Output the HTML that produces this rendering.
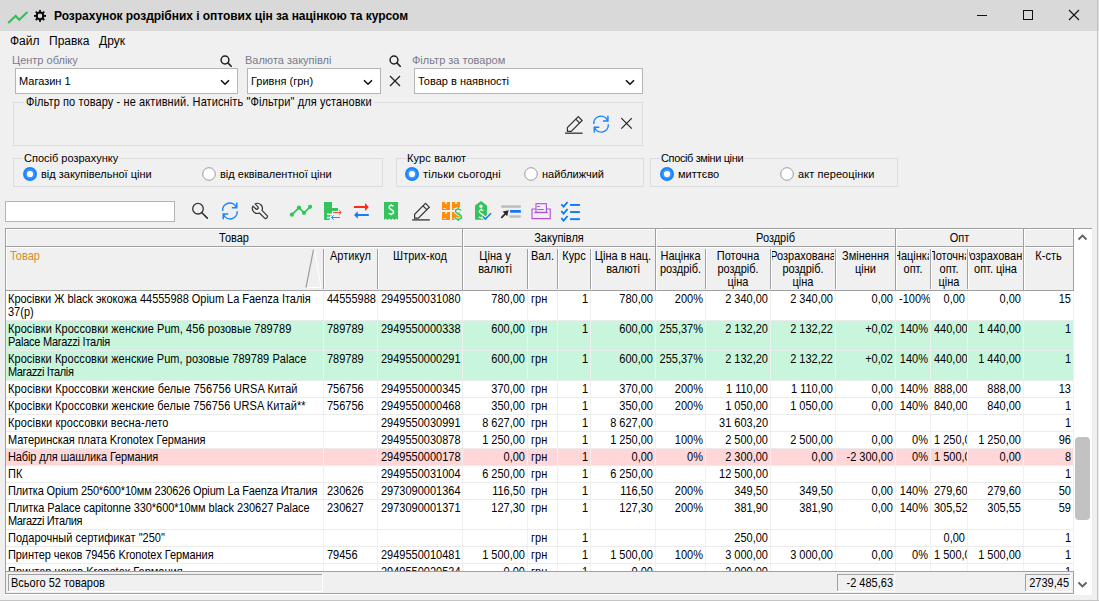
<!DOCTYPE html><html><head><meta charset='utf-8'><style>
*{box-sizing:border-box}
html,body{margin:0;padding:0}
body{width:1099px;height:601px;overflow:hidden;background:#f0f0f0;position:relative;font-family:'Liberation Sans',sans-serif;color:#000}
.a{position:absolute}
.t{position:absolute;white-space:pre;line-height:13px}
.g{font-size:11px}
.ln{display:block;transform:scaleY(1.12);transform-origin:0 10px}
</style></head><body>
<div class='a' style='left:0;top:0;width:1099px;height:31px;background:#d9d9d9'></div>
<svg class='a' style='left:0;top:0' width='52' height='31' viewBox='0 0 52 31'><polyline points='8.2,23 15.6,16 19.3,19.8 27.4,12.1' fill='none' stroke='#2ec05a' stroke-width='2.1' stroke-linejoin='miter'/><g fill='#0a0a0a'><rect x='39.1' y='9.9' width='1.8' height='3.2' transform='rotate(0 40 15.9)'/><rect x='39.1' y='9.9' width='1.8' height='3.2' transform='rotate(45 40 15.9)'/><rect x='39.1' y='9.9' width='1.8' height='3.2' transform='rotate(90 40 15.9)'/><rect x='39.1' y='9.9' width='1.8' height='3.2' transform='rotate(135 40 15.9)'/><rect x='39.1' y='9.9' width='1.8' height='3.2' transform='rotate(180 40 15.9)'/><rect x='39.1' y='9.9' width='1.8' height='3.2' transform='rotate(225 40 15.9)'/><rect x='39.1' y='9.9' width='1.8' height='3.2' transform='rotate(270 40 15.9)'/><rect x='39.1' y='9.9' width='1.8' height='3.2' transform='rotate(315 40 15.9)'/></g><circle cx='40' cy='15.9' r='3.35' fill='none' stroke='#0a0a0a' stroke-width='2.1'/></svg>
<div class='t' style='left:54px;top:10px;font-size:12px;font-weight:bold;letter-spacing:-0.04px'>Розрахунок роздрібних і оптових цін за націнкою та курсом</div>
<div class='a' style='left:977px;top:15px;width:10px;height:1px;background:#111'></div>
<div class='a' style='left:1023px;top:10px;width:10px;height:10px;border:1px solid #111'></div>
<svg class='a' style='left:1068px;top:9px' width='12' height='12' viewBox='0 0 12 12'><path d='M1 1L11 11M11 1L1 11' stroke='#111' stroke-width='1.1'/></svg>
<div class='a' style='left:1097px;top:0;width:1px;height:601px;background:#c4c4c4'></div>
<div class='a' style='left:0;top:600px;width:1099px;height:1px;background:#c4c4c4'></div>
<div class='t' style='left:10px;top:35px;font-size:12px'>Файл</div>
<div class='t' style='left:49px;top:35px;font-size:12px'>Правка</div>
<div class='t' style='left:99px;top:35px;font-size:12px'>Друк</div>
<div class='t' style='left:12px;top:54px;font-size:11px;color:#7a7a8a'>Центр обліку</div>
<svg class='a' style='left:220px;top:55px' width='12' height='12' viewBox='0 0 12 12'><circle cx='5' cy='5' r='3.9' fill='none' stroke='#222' stroke-width='1.5'/><path d='M7.9 7.9L11.2 11.2' stroke='#222' stroke-width='1.6' stroke-linecap='round'/></svg>
<div class='a' style='left:15px;top:68px;width:223px;height:26px;background:#fff;border:1px solid #b4b4b4'></div>
<div class='t' style='left:19px;top:75px;font-size:11px;color:#000'>Магазин 1</div>
<svg class='a' style='left:220px;top:79px' width='10' height='7' viewBox='0 0 10 7'><path d='M1 1.2L5 5.2L9 1.2' fill='none' stroke='#111' stroke-width='1.6'/></svg>
<div class='t' style='left:245px;top:54px;font-size:11px;color:#7a7a8a'>Валюта закупівлі</div>
<svg class='a' style='left:389px;top:55px' width='12' height='12' viewBox='0 0 12 12'><circle cx='5' cy='5' r='3.9' fill='none' stroke='#222' stroke-width='1.5'/><path d='M7.9 7.9L11.2 11.2' stroke='#222' stroke-width='1.6' stroke-linecap='round'/></svg>
<div class='a' style='left:247px;top:68px;width:134px;height:26px;background:#fff;border:1px solid #b4b4b4'></div>
<div class='t' style='left:251px;top:75px;font-size:11px;color:#000'>Гривня (грн)</div>
<svg class='a' style='left:363px;top:79px' width='10' height='7' viewBox='0 0 10 7'><path d='M1 1.2L5 5.2L9 1.2' fill='none' stroke='#111' stroke-width='1.6'/></svg>
<svg class='a' style='left:389px;top:75px' width='12' height='12' viewBox='0 0 12 12'><path d='M1 1L11 11M11 1L1 11' stroke='#222' stroke-width='1.3'/></svg>
<div class='t' style='left:412px;top:54px;font-size:11px;color:#7a7a8a'>Фільтр за товаром</div>
<div class='a' style='left:414px;top:68px;width:229px;height:26px;background:#fff;border:1px solid #b4b4b4'></div>
<div class='t' style='left:418px;top:75px;font-size:11px;color:#000'>Товар в наявності</div>
<svg class='a' style='left:625px;top:79px' width='10' height='7' viewBox='0 0 10 7'><path d='M1 1.2L5 5.2L9 1.2' fill='none' stroke='#111' stroke-width='1.6'/></svg>
<div class='a' style='left:13px;top:102px;width:630px;height:44px;border:1px solid #dcdcdc'></div>
<div class='t g' style='left:24px;top:96px;background:#f0f0f0;padding:0 2px;letter-spacing:0.1px'><div class='ln'>Фільтр по товару - не активний. Натисніть "Фільтри" для установки</div></div>
<svg class='a' style='left:560px;top:110px' width='80' height='30' viewBox='560 110 80 30'>
<g transform='translate(152.8 -86.7)' fill='none' stroke='#333' stroke-width='1.2' stroke-linejoin='miter'>
<path d='M414.6 214.3V218.1H418.4L429.3 207.2L425.5 203.4Z'/><path d='M423 205.9L426.8 209.7'/>
<path d='M412.2 219.9H429.8' stroke-width='1.3'/></g>
<g transform='translate(371.1 -86.8)' fill='none' stroke='#1a84ff' stroke-width='1.5'>
<path d='M222.7 210.8A7.1 7.1 0 0 1 236.3 207.3'/><path d='M236.8 202.6V207.8H231.8'/>
<path d='M237.2 211.2A7.1 7.1 0 0 1 223.6 214.6'/><path d='M223.2 219.2V214H228.2'/>
</g>
<path d='M621.3 118.2L631.8 128.7M631.8 118.2L621.3 128.7' stroke='#222' stroke-width='1.2'/>
</svg>
<div class='a' style='left:13px;top:158px;width:370px;height:29px;border:1px solid #dcdcdc'></div>
<div class='t' style='left:23px;top:151.5px;font-size:11px;background:#f0f0f0;padding:0 1px;letter-spacing:0px'>Спосіб розрахунку</div>
<svg class='a' style='left:23px;top:167px' width='14' height='14' viewBox='0 0 14 14'><circle cx='7' cy='7' r='7' fill='#1a82ff'/><circle cx='7' cy='7' r='4.9' fill='#3c98ff'/><circle cx='7' cy='7' r='3.1' fill='#fff'/></svg>
<div class='t' style='left:41px;top:168px;font-size:11px;letter-spacing:0px'>від закупівельної ціни</div>
<svg class='a' style='left:202px;top:167px' width='14' height='14' viewBox='0 0 14 14'><circle cx='7' cy='7' r='6.3' fill='#fff' stroke='#9a9a9a' stroke-width='1'/></svg>
<div class='t' style='left:220px;top:168px;font-size:11px;letter-spacing:0px'>від еквівалентної ціни</div>
<div class='a' style='left:396px;top:158px;width:248px;height:29px;border:1px solid #dcdcdc'></div>
<div class='t' style='left:406px;top:151.5px;font-size:11px;background:#f0f0f0;padding:0 1px;letter-spacing:0.15px'>Курс валют</div>
<svg class='a' style='left:405px;top:167px' width='14' height='14' viewBox='0 0 14 14'><circle cx='7' cy='7' r='7' fill='#1a82ff'/><circle cx='7' cy='7' r='4.9' fill='#3c98ff'/><circle cx='7' cy='7' r='3.1' fill='#fff'/></svg>
<div class='t' style='left:423px;top:168px;font-size:11px;letter-spacing:0.15px'>тільки сьогодні</div>
<svg class='a' style='left:524px;top:167px' width='14' height='14' viewBox='0 0 14 14'><circle cx='7' cy='7' r='6.3' fill='#fff' stroke='#9a9a9a' stroke-width='1'/></svg>
<div class='t' style='left:542px;top:168px;font-size:11px;letter-spacing:0px'>найближчий</div>
<div class='a' style='left:650px;top:158px;width:248px;height:29px;border:1px solid #dcdcdc'></div>
<div class='t' style='left:660px;top:151.5px;font-size:11px;background:#f0f0f0;padding:0 1px;letter-spacing:-0.38px'>Спосіб зміни ціни</div>
<svg class='a' style='left:660px;top:167px' width='14' height='14' viewBox='0 0 14 14'><circle cx='7' cy='7' r='7' fill='#1a82ff'/><circle cx='7' cy='7' r='4.9' fill='#3c98ff'/><circle cx='7' cy='7' r='3.1' fill='#fff'/></svg>
<div class='t' style='left:678px;top:168px;font-size:11px;letter-spacing:0px'>миттєво</div>
<svg class='a' style='left:780px;top:167px' width='14' height='14' viewBox='0 0 14 14'><circle cx='7' cy='7' r='6.3' fill='#fff' stroke='#9a9a9a' stroke-width='1'/></svg>
<div class='t' style='left:798px;top:168px;font-size:11px;letter-spacing:0.08px'>акт переоцінки</div>
<div class='a' style='left:5px;top:201px;width:170px;height:21px;background:#fff;border:1px solid #b4b4b4'></div>
<svg class='a' style='left:180px;top:195px' width='415' height='30' viewBox='180 195 415 30'>
<circle cx='198' cy='208.7' r='5.3' fill='none' stroke='#333' stroke-width='1.3'/><path d='M201.9 212.7L207.3 218.1' stroke='#333' stroke-width='1.6' stroke-linecap='round'/>
<g transform='translate(0 0)' fill='none' stroke='#1a84ff' stroke-width='1.5'>
<path d='M222.7 210.8A7.1 7.1 0 0 1 236.3 207.3'/><path d='M236.8 202.6V207.8H231.8'/>
<path d='M237.2 211.2A7.1 7.1 0 0 1 223.6 214.6'/><path d='M223.2 219.2V214H228.2'/>
</g>
<path transform='translate(257.4 208.4) rotate(-45)' d='M-1.5 -4.8L-1.5 -1A1.5 1.5 0 0 0 1.5 -1L1.5 -4.8A5 5 0 0 1 1.8 4.66L1.8 11.6A1.8 1.8 0 0 1 -1.8 11.6L-1.8 4.66A5 5 0 0 1 -1.5 -4.8Z' fill='none' stroke='#333' stroke-width='1.2' stroke-linejoin='round'/>
<polyline points='291.9,214.7 299,207.6 304,212.85 310.1,206.8' fill='none' stroke='#2ec657' stroke-width='1.7'/>
<circle cx='291.9' cy='214.7' r='2.1' fill='#2ec657'/>
<circle cx='299' cy='207.6' r='2.1' fill='#2ec657'/>
<circle cx='304' cy='212.85' r='2.1' fill='#2ec657'/>
<circle cx='310.1' cy='206.8' r='2.1' fill='#2ec657'/>
<path d='M324 202H332V208H338V211H332V220H324Z' fill='#34c35c'/>
<rect x='327' y='213.5' width='6' height='1.6' fill='#f0f0f0'/><rect x='327' y='216.8' width='4' height='1.6' fill='#f0f0f0'/><path d='M329 220L332 217.5V220Z' fill='#f0f0f0'/>
<rect x='332' y='211' width='10' height='3' fill='#f0f0f0'/><rect x='330' y='215.5' width='12' height='5' fill='#f0f0f0'/>
<path d='M333 212.5H341M339 210.3L341.3 212.5L339 214.7' fill='none' stroke='#ff3322' stroke-width='0.9'/>
<path d='M331.5 217.5H340M333.7 215.3L331.5 217.5L333.7 219.7' fill='none' stroke='#1a7aff' stroke-width='0.9'/>
<rect x='354' y='206' width='12' height='2' fill='#ff2a1a'/><path d='M365 203L368.8 207L365 211Z' fill='#ff2a1a'/>
<rect x='357' y='214' width='11.8' height='2' fill='#1a7aff'/><path d='M357.8 211.2L354 215L357.8 218.8Z' fill='#1a7aff'/>
<path d='M384 202H398V220L396.25 218.6L394.5 220L392.75 218.6L391 220L389.25 218.6L387.5 220L385.75 218.6L384 220Z' fill='#34c35c'/>
<path d='M393.4 206.3C392.6 205.3 389.2 205 389 207.3C388.9 209.5 393.6 209.6 393.6 212.2C393.6 214.5 389.8 214.4 388.8 213.2M391.2 204.3V205.4M391.2 214.2V215.3' fill='none' stroke='#fff' stroke-width='1.5'/>
<g transform='translate(0 0)' fill='none' stroke='#333' stroke-width='1.2' stroke-linejoin='miter'>
<path d='M414.6 214.3V218.1H418.4L429.3 207.2L425.5 203.4Z'/><path d='M423 205.9L426.8 209.7'/>
<path d='M412.2 219.9H429.8' stroke-width='1.3'/></g>
<rect x='442' y='202' width='8' height='8' fill='#ff8f0a'/><rect x='445.2' y='202' width='1.6' height='2' fill='#f0f0f0'/><rect x='443.3' y='208.1' width='2.6' height='0.8' fill='#f0f0f0'/>
<rect x='452' y='202' width='8' height='8' fill='#ff8f0a'/><rect x='455.2' y='202' width='1.6' height='2' fill='#f0f0f0'/><rect x='453.3' y='208.1' width='2.6' height='0.8' fill='#f0f0f0'/>
<rect x='442' y='212' width='8' height='8' fill='#ff8f0a'/><rect x='445.2' y='212' width='1.6' height='2' fill='#f0f0f0'/><rect x='443.3' y='218.1' width='2.6' height='0.8' fill='#f0f0f0'/>
<rect x='452' y='212' width='8' height='8' fill='#ff8f0a'/><rect x='455.2' y='212' width='1.6' height='2' fill='#f0f0f0'/><rect x='453.3' y='218.1' width='2.6' height='0.8' fill='#f0f0f0'/>
<path d='M461 210.6C460.3 208.8 455.6 208.3 455.4 211.3C455.3 214.2 461.5 213.8 461.5 217C461.5 219.8 456.2 219.7 455 217.8M458.2 207V209M458.2 219.3V221' fill='none' stroke='#f0f0f0' stroke-width='3.2'/>
<path d='M461 210.6C460.3 208.8 455.6 208.3 455.4 211.3C455.3 214.2 461.5 213.8 461.5 217C461.5 219.8 456.2 219.7 455 217.8M458.2 207V209M458.2 219.3V221' fill='none' stroke='#2ec657' stroke-width='1.4'/>
<path d='M481 201L487 205.5V219.8H475V205.5Z' fill='#34c35c'/><circle cx='481' cy='206.3' r='1.7' fill='#f0f0f0'/>
<path d='M483.3 210.6C482.6 209.6 479.3 209.4 479.2 211.6C479.1 213.6 483.5 213.6 483.5 215.9C483.5 218 479.8 217.9 479 216.9M481.3 208.6V209.6M481.3 217.6V218.8' fill='none' stroke='#fff' stroke-width='1.3'/>
<path d='M483 216.5L485.3 219L491 213.2' fill='none' stroke='#f0f0f0' stroke-width='3.4'/><path d='M483 216.5L485.3 219L491 213.2' fill='none' stroke='#1a7aff' stroke-width='1.6'/>
<rect x='501.2' y='205.3' width='19.6' height='2.5' fill='#bdbdbd'/><rect x='510.1' y='210' width='10.7' height='2.7' fill='#0a78ff'/><rect x='509.3' y='215.3' width='11.5' height='2.5' fill='#bdbdbd'/>
<path d='M501.8 217.4L506 213.2' stroke='#2b2b2b' stroke-width='1.8' stroke-linecap='round'/><path d='M508.6 210.2L502.6 211.6L507.2 216.2Z' fill='#2b2b2b'/>
<g fill='none' stroke='#b04ee0' stroke-width='1.1'><path d='M536 209H532V218.6H550.2V209H546.4'/><rect x='536' y='203.7' width='10.4' height='8.6'/><path d='M534.3 212.6H547.8'/><path d='M537.3 206.5H539.8M537.3 209.5H543.8'/></g>
<path d='M561.3 204.4L563.6 206.6L567.6 202' fill='none' stroke='#0a78ff' stroke-width='1.8'/>
<rect x='570.1' y='204.0' width='9.8' height='1.9' fill='#0a78ff'/>
<path d='M561.3 211.1L563.6 213.6L567.6 209' fill='none' stroke='#0a78ff' stroke-width='1.8'/>
<rect x='570.1' y='211.1' width='9.8' height='1.9' fill='#0a78ff'/>
<path d='M561.3 218.1L563.6 220.6L567.6 216' fill='none' stroke='#0a78ff' stroke-width='1.8'/>
<rect x='570.1' y='218.2' width='9.8' height='1.9' fill='#0a78ff'/>
</svg>
<div class='a' style='left:6px;top:291px;width:1067px;height:302px;background:#fff;'></div>
<div class='a' style='left:6px;top:229px;width:1067px;height:61px;background:#f0f0f0;'></div>
<div class='a' style='left:6px;top:291px;width:1067px;height:30px;background:#fff;overflow:hidden'>
<div class='a' style='left:317px;top:0px;width:1px;height:29px;background:#f0f0f0;'></div>
<div class='a' style='left:371px;top:0px;width:1px;height:29px;background:#f0f0f0;'></div>
<div class='a' style='left:456px;top:0px;width:1px;height:29px;background:#f0f0f0;'></div>
<div class='a' style='left:521px;top:0px;width:1px;height:29px;background:#f0f0f0;'></div>
<div class='a' style='left:551px;top:0px;width:1px;height:29px;background:#f0f0f0;'></div>
<div class='a' style='left:584px;top:0px;width:1px;height:29px;background:#f0f0f0;'></div>
<div class='a' style='left:649px;top:0px;width:1px;height:29px;background:#f0f0f0;'></div>
<div class='a' style='left:699px;top:0px;width:1px;height:29px;background:#f0f0f0;'></div>
<div class='a' style='left:764px;top:0px;width:1px;height:29px;background:#f0f0f0;'></div>
<div class='a' style='left:829px;top:0px;width:1px;height:29px;background:#f0f0f0;'></div>
<div class='a' style='left:889px;top:0px;width:1px;height:29px;background:#f0f0f0;'></div>
<div class='a' style='left:924px;top:0px;width:1px;height:29px;background:#f0f0f0;'></div>
<div class='a' style='left:961px;top:0px;width:1px;height:29px;background:#f0f0f0;'></div>
<div class='a' style='left:1017px;top:0px;width:1px;height:29px;background:#f0f0f0;'></div>
<div class='a' style='left:0px;top:29px;width:1067px;height:1px;background:#ebebeb;'></div>
<div class='t g' style='left:0px;top:2px;width:317px;height:28px;overflow:hidden;text-align:left;padding-left:2px;padding-right:2px'><div class='ln' style='letter-spacing:-0.022px'>Кросівки Ж black экокожа 44555988 Opium La Faenza Італія</div><div class='ln' style='letter-spacing:0.000px'>37(р)</div></div>
<div class='t g' style='left:318px;top:2px;width:53px;height:28px;overflow:hidden;text-align:left;padding-left:3px;padding-right:2px'><div class='ln'>44555988</div></div>
<div class='t g' style='left:372px;top:2px;width:84px;height:28px;overflow:hidden;text-align:left;padding-left:3px;padding-right:2px'><div class='ln'>2949550031080</div></div>
<div class='t g' style='left:457px;top:2px;width:64px;height:28px;overflow:hidden;text-align:right;padding-left:3px;padding-right:2px'><div class='ln'>780,00</div></div>
<div class='t g' style='left:522px;top:2px;width:29px;height:28px;overflow:hidden;text-align:left;padding-left:3px;padding-right:2px'><div class='ln'>грн</div></div>
<div class='t g' style='left:552px;top:2px;width:32px;height:28px;overflow:hidden;text-align:right;padding-left:3px;padding-right:2px'><div class='ln'>1</div></div>
<div class='t g' style='left:585px;top:2px;width:64px;height:28px;overflow:hidden;text-align:right;padding-left:3px;padding-right:2px'><div class='ln'>780,00</div></div>
<div class='t g' style='left:650px;top:2px;width:49px;height:28px;overflow:hidden;text-align:right;padding-left:3px;padding-right:2px'><div class='ln'>200%</div></div>
<div class='t g' style='left:700px;top:2px;width:64px;height:28px;overflow:hidden;text-align:right;padding-left:3px;padding-right:2px'><div class='ln'>2 340,00</div></div>
<div class='t g' style='left:765px;top:2px;width:64px;height:28px;overflow:hidden;text-align:right;padding-left:3px;padding-right:2px'><div class='ln'>2 340,00</div></div>
<div class='t g' style='left:830px;top:2px;width:59px;height:28px;overflow:hidden;text-align:right;padding-left:3px;padding-right:2px'><div class='ln'>0,00</div></div>
<div class='t g' style='left:890px;top:2px;width:34px;height:28px;overflow:hidden;text-align:right;padding-left:3px;padding-right:2px'><div class='ln'>-100%</div></div>
<div class='t g' style='left:925px;top:2px;width:36px;height:28px;overflow:hidden;text-align:right;padding-left:3px;padding-right:2px'><div class='ln'>0,00</div></div>
<div class='t g' style='left:962px;top:2px;width:55px;height:28px;overflow:hidden;text-align:right;padding-left:3px;padding-right:2px'><div class='ln'>0,00</div></div>
<div class='t g' style='left:1018px;top:2px;width:49px;height:28px;overflow:hidden;text-align:right;padding-left:3px;padding-right:2px'><div class='ln'>15</div></div>
</div>
<div class='a' style='left:6px;top:321px;width:1067px;height:30px;background:#c8f6dc;overflow:hidden'>
<div class='a' style='left:317px;top:0px;width:1px;height:29px;background:#f0f0f0;'></div>
<div class='a' style='left:371px;top:0px;width:1px;height:29px;background:#f0f0f0;'></div>
<div class='a' style='left:456px;top:0px;width:1px;height:29px;background:#f0f0f0;'></div>
<div class='a' style='left:521px;top:0px;width:1px;height:29px;background:#f0f0f0;'></div>
<div class='a' style='left:551px;top:0px;width:1px;height:29px;background:#f0f0f0;'></div>
<div class='a' style='left:584px;top:0px;width:1px;height:29px;background:#f0f0f0;'></div>
<div class='a' style='left:649px;top:0px;width:1px;height:29px;background:#f0f0f0;'></div>
<div class='a' style='left:699px;top:0px;width:1px;height:29px;background:#f0f0f0;'></div>
<div class='a' style='left:764px;top:0px;width:1px;height:29px;background:#f0f0f0;'></div>
<div class='a' style='left:829px;top:0px;width:1px;height:29px;background:#f0f0f0;'></div>
<div class='a' style='left:889px;top:0px;width:1px;height:29px;background:#f0f0f0;'></div>
<div class='a' style='left:924px;top:0px;width:1px;height:29px;background:#f0f0f0;'></div>
<div class='a' style='left:961px;top:0px;width:1px;height:29px;background:#f0f0f0;'></div>
<div class='a' style='left:1017px;top:0px;width:1px;height:29px;background:#f0f0f0;'></div>
<div class='a' style='left:0px;top:29px;width:1067px;height:1px;background:#ebebeb;'></div>
<div class='t g' style='left:0px;top:2px;width:317px;height:28px;overflow:hidden;text-align:left;padding-left:2px;padding-right:2px'><div class='ln' style='letter-spacing:0.061px'>Кросівки Кроссовки женские Pum, 456 розовые 789789</div><div class='ln' style='letter-spacing:-0.244px'>Palace Marazzi Італія</div></div>
<div class='t g' style='left:318px;top:2px;width:53px;height:28px;overflow:hidden;text-align:left;padding-left:3px;padding-right:2px'><div class='ln'>789789</div></div>
<div class='t g' style='left:372px;top:2px;width:84px;height:28px;overflow:hidden;text-align:left;padding-left:3px;padding-right:2px'><div class='ln'>2949550000338</div></div>
<div class='t g' style='left:457px;top:2px;width:64px;height:28px;overflow:hidden;text-align:right;padding-left:3px;padding-right:2px'><div class='ln'>600,00</div></div>
<div class='t g' style='left:522px;top:2px;width:29px;height:28px;overflow:hidden;text-align:left;padding-left:3px;padding-right:2px'><div class='ln'>грн</div></div>
<div class='t g' style='left:552px;top:2px;width:32px;height:28px;overflow:hidden;text-align:right;padding-left:3px;padding-right:2px'><div class='ln'>1</div></div>
<div class='t g' style='left:585px;top:2px;width:64px;height:28px;overflow:hidden;text-align:right;padding-left:3px;padding-right:2px'><div class='ln'>600,00</div></div>
<div class='t g' style='left:650px;top:2px;width:49px;height:28px;overflow:hidden;text-align:right;padding-left:3px;padding-right:2px'><div class='ln'>255,37%</div></div>
<div class='t g' style='left:700px;top:2px;width:64px;height:28px;overflow:hidden;text-align:right;padding-left:3px;padding-right:2px'><div class='ln'>2 132,20</div></div>
<div class='t g' style='left:765px;top:2px;width:64px;height:28px;overflow:hidden;text-align:right;padding-left:3px;padding-right:2px'><div class='ln'>2 132,22</div></div>
<div class='t g' style='left:830px;top:2px;width:59px;height:28px;overflow:hidden;text-align:right;padding-left:3px;padding-right:2px'><div class='ln'>+0,02</div></div>
<div class='t g' style='left:890px;top:2px;width:34px;height:28px;overflow:hidden;text-align:right;padding-left:3px;padding-right:2px'><div class='ln'>140%</div></div>
<div class='t g' style='left:925px;top:2px;width:36px;height:28px;overflow:hidden;text-align:right;padding-left:3px;padding-right:2px'><div class='ln'>440,00</div></div>
<div class='t g' style='left:962px;top:2px;width:55px;height:28px;overflow:hidden;text-align:right;padding-left:3px;padding-right:2px'><div class='ln'>1 440,00</div></div>
<div class='t g' style='left:1018px;top:2px;width:49px;height:28px;overflow:hidden;text-align:right;padding-left:3px;padding-right:2px'><div class='ln'>1</div></div>
</div>
<div class='a' style='left:6px;top:351px;width:1067px;height:30px;background:#c8f6dc;overflow:hidden'>
<div class='a' style='left:317px;top:0px;width:1px;height:29px;background:#f0f0f0;'></div>
<div class='a' style='left:371px;top:0px;width:1px;height:29px;background:#f0f0f0;'></div>
<div class='a' style='left:456px;top:0px;width:1px;height:29px;background:#f0f0f0;'></div>
<div class='a' style='left:521px;top:0px;width:1px;height:29px;background:#f0f0f0;'></div>
<div class='a' style='left:551px;top:0px;width:1px;height:29px;background:#f0f0f0;'></div>
<div class='a' style='left:584px;top:0px;width:1px;height:29px;background:#f0f0f0;'></div>
<div class='a' style='left:649px;top:0px;width:1px;height:29px;background:#f0f0f0;'></div>
<div class='a' style='left:699px;top:0px;width:1px;height:29px;background:#f0f0f0;'></div>
<div class='a' style='left:764px;top:0px;width:1px;height:29px;background:#f0f0f0;'></div>
<div class='a' style='left:829px;top:0px;width:1px;height:29px;background:#f0f0f0;'></div>
<div class='a' style='left:889px;top:0px;width:1px;height:29px;background:#f0f0f0;'></div>
<div class='a' style='left:924px;top:0px;width:1px;height:29px;background:#f0f0f0;'></div>
<div class='a' style='left:961px;top:0px;width:1px;height:29px;background:#f0f0f0;'></div>
<div class='a' style='left:1017px;top:0px;width:1px;height:29px;background:#f0f0f0;'></div>
<div class='a' style='left:0px;top:29px;width:1067px;height:1px;background:#ebebeb;'></div>
<div class='t g' style='left:0px;top:2px;width:317px;height:28px;overflow:hidden;text-align:left;padding-left:2px;padding-right:2px'><div class='ln' style='letter-spacing:0.052px'>Кросівки Кроссовки женские Pum, розовые 789789 Palace</div><div class='ln' style='letter-spacing:-0.352px'>Marazzi Італія</div></div>
<div class='t g' style='left:318px;top:2px;width:53px;height:28px;overflow:hidden;text-align:left;padding-left:3px;padding-right:2px'><div class='ln'>789789</div></div>
<div class='t g' style='left:372px;top:2px;width:84px;height:28px;overflow:hidden;text-align:left;padding-left:3px;padding-right:2px'><div class='ln'>2949550000291</div></div>
<div class='t g' style='left:457px;top:2px;width:64px;height:28px;overflow:hidden;text-align:right;padding-left:3px;padding-right:2px'><div class='ln'>600,00</div></div>
<div class='t g' style='left:522px;top:2px;width:29px;height:28px;overflow:hidden;text-align:left;padding-left:3px;padding-right:2px'><div class='ln'>грн</div></div>
<div class='t g' style='left:552px;top:2px;width:32px;height:28px;overflow:hidden;text-align:right;padding-left:3px;padding-right:2px'><div class='ln'>1</div></div>
<div class='t g' style='left:585px;top:2px;width:64px;height:28px;overflow:hidden;text-align:right;padding-left:3px;padding-right:2px'><div class='ln'>600,00</div></div>
<div class='t g' style='left:650px;top:2px;width:49px;height:28px;overflow:hidden;text-align:right;padding-left:3px;padding-right:2px'><div class='ln'>255,37%</div></div>
<div class='t g' style='left:700px;top:2px;width:64px;height:28px;overflow:hidden;text-align:right;padding-left:3px;padding-right:2px'><div class='ln'>2 132,20</div></div>
<div class='t g' style='left:765px;top:2px;width:64px;height:28px;overflow:hidden;text-align:right;padding-left:3px;padding-right:2px'><div class='ln'>2 132,22</div></div>
<div class='t g' style='left:830px;top:2px;width:59px;height:28px;overflow:hidden;text-align:right;padding-left:3px;padding-right:2px'><div class='ln'>+0,02</div></div>
<div class='t g' style='left:890px;top:2px;width:34px;height:28px;overflow:hidden;text-align:right;padding-left:3px;padding-right:2px'><div class='ln'>140%</div></div>
<div class='t g' style='left:925px;top:2px;width:36px;height:28px;overflow:hidden;text-align:right;padding-left:3px;padding-right:2px'><div class='ln'>440,00</div></div>
<div class='t g' style='left:962px;top:2px;width:55px;height:28px;overflow:hidden;text-align:right;padding-left:3px;padding-right:2px'><div class='ln'>1 440,00</div></div>
<div class='t g' style='left:1018px;top:2px;width:49px;height:28px;overflow:hidden;text-align:right;padding-left:3px;padding-right:2px'><div class='ln'>1</div></div>
</div>
<div class='a' style='left:6px;top:381px;width:1067px;height:17px;background:#fff;overflow:hidden'>
<div class='a' style='left:317px;top:0px;width:1px;height:16px;background:#f0f0f0;'></div>
<div class='a' style='left:371px;top:0px;width:1px;height:16px;background:#f0f0f0;'></div>
<div class='a' style='left:456px;top:0px;width:1px;height:16px;background:#f0f0f0;'></div>
<div class='a' style='left:521px;top:0px;width:1px;height:16px;background:#f0f0f0;'></div>
<div class='a' style='left:551px;top:0px;width:1px;height:16px;background:#f0f0f0;'></div>
<div class='a' style='left:584px;top:0px;width:1px;height:16px;background:#f0f0f0;'></div>
<div class='a' style='left:649px;top:0px;width:1px;height:16px;background:#f0f0f0;'></div>
<div class='a' style='left:699px;top:0px;width:1px;height:16px;background:#f0f0f0;'></div>
<div class='a' style='left:764px;top:0px;width:1px;height:16px;background:#f0f0f0;'></div>
<div class='a' style='left:829px;top:0px;width:1px;height:16px;background:#f0f0f0;'></div>
<div class='a' style='left:889px;top:0px;width:1px;height:16px;background:#f0f0f0;'></div>
<div class='a' style='left:924px;top:0px;width:1px;height:16px;background:#f0f0f0;'></div>
<div class='a' style='left:961px;top:0px;width:1px;height:16px;background:#f0f0f0;'></div>
<div class='a' style='left:1017px;top:0px;width:1px;height:16px;background:#f0f0f0;'></div>
<div class='a' style='left:0px;top:16px;width:1067px;height:1px;background:#ebebeb;'></div>
<div class='t g' style='left:0px;top:2px;width:317px;height:15px;overflow:hidden;text-align:left;padding-left:2px;padding-right:2px'><div class='ln' style='letter-spacing:0.086px'>Кросівки Кроссовки женские белые 756756 URSA Китай</div></div>
<div class='t g' style='left:318px;top:2px;width:53px;height:15px;overflow:hidden;text-align:left;padding-left:3px;padding-right:2px'><div class='ln'>756756</div></div>
<div class='t g' style='left:372px;top:2px;width:84px;height:15px;overflow:hidden;text-align:left;padding-left:3px;padding-right:2px'><div class='ln'>2949550000345</div></div>
<div class='t g' style='left:457px;top:2px;width:64px;height:15px;overflow:hidden;text-align:right;padding-left:3px;padding-right:2px'><div class='ln'>370,00</div></div>
<div class='t g' style='left:522px;top:2px;width:29px;height:15px;overflow:hidden;text-align:left;padding-left:3px;padding-right:2px'><div class='ln'>грн</div></div>
<div class='t g' style='left:552px;top:2px;width:32px;height:15px;overflow:hidden;text-align:right;padding-left:3px;padding-right:2px'><div class='ln'>1</div></div>
<div class='t g' style='left:585px;top:2px;width:64px;height:15px;overflow:hidden;text-align:right;padding-left:3px;padding-right:2px'><div class='ln'>370,00</div></div>
<div class='t g' style='left:650px;top:2px;width:49px;height:15px;overflow:hidden;text-align:right;padding-left:3px;padding-right:2px'><div class='ln'>200%</div></div>
<div class='t g' style='left:700px;top:2px;width:64px;height:15px;overflow:hidden;text-align:right;padding-left:3px;padding-right:2px'><div class='ln'>1 110,00</div></div>
<div class='t g' style='left:765px;top:2px;width:64px;height:15px;overflow:hidden;text-align:right;padding-left:3px;padding-right:2px'><div class='ln'>1 110,00</div></div>
<div class='t g' style='left:830px;top:2px;width:59px;height:15px;overflow:hidden;text-align:right;padding-left:3px;padding-right:2px'><div class='ln'>0,00</div></div>
<div class='t g' style='left:890px;top:2px;width:34px;height:15px;overflow:hidden;text-align:right;padding-left:3px;padding-right:2px'><div class='ln'>140%</div></div>
<div class='t g' style='left:925px;top:2px;width:36px;height:15px;overflow:hidden;text-align:right;padding-left:3px;padding-right:2px'><div class='ln'>888,000</div></div>
<div class='t g' style='left:962px;top:2px;width:55px;height:15px;overflow:hidden;text-align:right;padding-left:3px;padding-right:2px'><div class='ln'>888,00</div></div>
<div class='t g' style='left:1018px;top:2px;width:49px;height:15px;overflow:hidden;text-align:right;padding-left:3px;padding-right:2px'><div class='ln'>13</div></div>
</div>
<div class='a' style='left:6px;top:398px;width:1067px;height:17px;background:#fff;overflow:hidden'>
<div class='a' style='left:317px;top:0px;width:1px;height:16px;background:#f0f0f0;'></div>
<div class='a' style='left:371px;top:0px;width:1px;height:16px;background:#f0f0f0;'></div>
<div class='a' style='left:456px;top:0px;width:1px;height:16px;background:#f0f0f0;'></div>
<div class='a' style='left:521px;top:0px;width:1px;height:16px;background:#f0f0f0;'></div>
<div class='a' style='left:551px;top:0px;width:1px;height:16px;background:#f0f0f0;'></div>
<div class='a' style='left:584px;top:0px;width:1px;height:16px;background:#f0f0f0;'></div>
<div class='a' style='left:649px;top:0px;width:1px;height:16px;background:#f0f0f0;'></div>
<div class='a' style='left:699px;top:0px;width:1px;height:16px;background:#f0f0f0;'></div>
<div class='a' style='left:764px;top:0px;width:1px;height:16px;background:#f0f0f0;'></div>
<div class='a' style='left:829px;top:0px;width:1px;height:16px;background:#f0f0f0;'></div>
<div class='a' style='left:889px;top:0px;width:1px;height:16px;background:#f0f0f0;'></div>
<div class='a' style='left:924px;top:0px;width:1px;height:16px;background:#f0f0f0;'></div>
<div class='a' style='left:961px;top:0px;width:1px;height:16px;background:#f0f0f0;'></div>
<div class='a' style='left:1017px;top:0px;width:1px;height:16px;background:#f0f0f0;'></div>
<div class='a' style='left:0px;top:16px;width:1067px;height:1px;background:#ebebeb;'></div>
<div class='t g' style='left:0px;top:2px;width:317px;height:15px;overflow:hidden;text-align:left;padding-left:2px;padding-right:2px'><div class='ln' style='letter-spacing:0.073px'>Кросівки Кроссовки женские белые 756756 URSA Китай**</div></div>
<div class='t g' style='left:318px;top:2px;width:53px;height:15px;overflow:hidden;text-align:left;padding-left:3px;padding-right:2px'><div class='ln'>756756</div></div>
<div class='t g' style='left:372px;top:2px;width:84px;height:15px;overflow:hidden;text-align:left;padding-left:3px;padding-right:2px'><div class='ln'>2949550000468</div></div>
<div class='t g' style='left:457px;top:2px;width:64px;height:15px;overflow:hidden;text-align:right;padding-left:3px;padding-right:2px'><div class='ln'>350,00</div></div>
<div class='t g' style='left:522px;top:2px;width:29px;height:15px;overflow:hidden;text-align:left;padding-left:3px;padding-right:2px'><div class='ln'>грн</div></div>
<div class='t g' style='left:552px;top:2px;width:32px;height:15px;overflow:hidden;text-align:right;padding-left:3px;padding-right:2px'><div class='ln'>1</div></div>
<div class='t g' style='left:585px;top:2px;width:64px;height:15px;overflow:hidden;text-align:right;padding-left:3px;padding-right:2px'><div class='ln'>350,00</div></div>
<div class='t g' style='left:650px;top:2px;width:49px;height:15px;overflow:hidden;text-align:right;padding-left:3px;padding-right:2px'><div class='ln'>200%</div></div>
<div class='t g' style='left:700px;top:2px;width:64px;height:15px;overflow:hidden;text-align:right;padding-left:3px;padding-right:2px'><div class='ln'>1 050,00</div></div>
<div class='t g' style='left:765px;top:2px;width:64px;height:15px;overflow:hidden;text-align:right;padding-left:3px;padding-right:2px'><div class='ln'>1 050,00</div></div>
<div class='t g' style='left:830px;top:2px;width:59px;height:15px;overflow:hidden;text-align:right;padding-left:3px;padding-right:2px'><div class='ln'>0,00</div></div>
<div class='t g' style='left:890px;top:2px;width:34px;height:15px;overflow:hidden;text-align:right;padding-left:3px;padding-right:2px'><div class='ln'>140%</div></div>
<div class='t g' style='left:925px;top:2px;width:36px;height:15px;overflow:hidden;text-align:right;padding-left:3px;padding-right:2px'><div class='ln'>840,000</div></div>
<div class='t g' style='left:962px;top:2px;width:55px;height:15px;overflow:hidden;text-align:right;padding-left:3px;padding-right:2px'><div class='ln'>840,00</div></div>
<div class='t g' style='left:1018px;top:2px;width:49px;height:15px;overflow:hidden;text-align:right;padding-left:3px;padding-right:2px'><div class='ln'>1</div></div>
</div>
<div class='a' style='left:6px;top:415px;width:1067px;height:17px;background:#fff;overflow:hidden'>
<div class='a' style='left:317px;top:0px;width:1px;height:16px;background:#f0f0f0;'></div>
<div class='a' style='left:371px;top:0px;width:1px;height:16px;background:#f0f0f0;'></div>
<div class='a' style='left:456px;top:0px;width:1px;height:16px;background:#f0f0f0;'></div>
<div class='a' style='left:521px;top:0px;width:1px;height:16px;background:#f0f0f0;'></div>
<div class='a' style='left:551px;top:0px;width:1px;height:16px;background:#f0f0f0;'></div>
<div class='a' style='left:584px;top:0px;width:1px;height:16px;background:#f0f0f0;'></div>
<div class='a' style='left:649px;top:0px;width:1px;height:16px;background:#f0f0f0;'></div>
<div class='a' style='left:699px;top:0px;width:1px;height:16px;background:#f0f0f0;'></div>
<div class='a' style='left:764px;top:0px;width:1px;height:16px;background:#f0f0f0;'></div>
<div class='a' style='left:829px;top:0px;width:1px;height:16px;background:#f0f0f0;'></div>
<div class='a' style='left:889px;top:0px;width:1px;height:16px;background:#f0f0f0;'></div>
<div class='a' style='left:924px;top:0px;width:1px;height:16px;background:#f0f0f0;'></div>
<div class='a' style='left:961px;top:0px;width:1px;height:16px;background:#f0f0f0;'></div>
<div class='a' style='left:1017px;top:0px;width:1px;height:16px;background:#f0f0f0;'></div>
<div class='a' style='left:0px;top:16px;width:1067px;height:1px;background:#ebebeb;'></div>
<div class='t g' style='left:0px;top:2px;width:317px;height:15px;overflow:hidden;text-align:left;padding-left:2px;padding-right:2px'><div class='ln' style='letter-spacing:0.118px'>Кросівки кроссовки весна-лето</div></div>
<div class='t g' style='left:372px;top:2px;width:84px;height:15px;overflow:hidden;text-align:left;padding-left:3px;padding-right:2px'><div class='ln'>2949550030991</div></div>
<div class='t g' style='left:457px;top:2px;width:64px;height:15px;overflow:hidden;text-align:right;padding-left:3px;padding-right:2px'><div class='ln'>8 627,00</div></div>
<div class='t g' style='left:522px;top:2px;width:29px;height:15px;overflow:hidden;text-align:left;padding-left:3px;padding-right:2px'><div class='ln'>грн</div></div>
<div class='t g' style='left:552px;top:2px;width:32px;height:15px;overflow:hidden;text-align:right;padding-left:3px;padding-right:2px'><div class='ln'>1</div></div>
<div class='t g' style='left:585px;top:2px;width:64px;height:15px;overflow:hidden;text-align:right;padding-left:3px;padding-right:2px'><div class='ln'>8 627,00</div></div>
<div class='t g' style='left:700px;top:2px;width:64px;height:15px;overflow:hidden;text-align:right;padding-left:3px;padding-right:2px'><div class='ln'>31 603,20</div></div>
<div class='t g' style='left:1018px;top:2px;width:49px;height:15px;overflow:hidden;text-align:right;padding-left:3px;padding-right:2px'><div class='ln'>1</div></div>
</div>
<div class='a' style='left:6px;top:432px;width:1067px;height:17px;background:#fff;overflow:hidden'>
<div class='a' style='left:317px;top:0px;width:1px;height:16px;background:#f0f0f0;'></div>
<div class='a' style='left:371px;top:0px;width:1px;height:16px;background:#f0f0f0;'></div>
<div class='a' style='left:456px;top:0px;width:1px;height:16px;background:#f0f0f0;'></div>
<div class='a' style='left:521px;top:0px;width:1px;height:16px;background:#f0f0f0;'></div>
<div class='a' style='left:551px;top:0px;width:1px;height:16px;background:#f0f0f0;'></div>
<div class='a' style='left:584px;top:0px;width:1px;height:16px;background:#f0f0f0;'></div>
<div class='a' style='left:649px;top:0px;width:1px;height:16px;background:#f0f0f0;'></div>
<div class='a' style='left:699px;top:0px;width:1px;height:16px;background:#f0f0f0;'></div>
<div class='a' style='left:764px;top:0px;width:1px;height:16px;background:#f0f0f0;'></div>
<div class='a' style='left:829px;top:0px;width:1px;height:16px;background:#f0f0f0;'></div>
<div class='a' style='left:889px;top:0px;width:1px;height:16px;background:#f0f0f0;'></div>
<div class='a' style='left:924px;top:0px;width:1px;height:16px;background:#f0f0f0;'></div>
<div class='a' style='left:961px;top:0px;width:1px;height:16px;background:#f0f0f0;'></div>
<div class='a' style='left:1017px;top:0px;width:1px;height:16px;background:#f0f0f0;'></div>
<div class='a' style='left:0px;top:16px;width:1067px;height:1px;background:#ebebeb;'></div>
<div class='t g' style='left:0px;top:2px;width:317px;height:15px;overflow:hidden;text-align:left;padding-left:2px;padding-right:2px'><div class='ln' style='letter-spacing:-0.043px'>Материнская плата Kronotex Германия</div></div>
<div class='t g' style='left:372px;top:2px;width:84px;height:15px;overflow:hidden;text-align:left;padding-left:3px;padding-right:2px'><div class='ln'>2949550030878</div></div>
<div class='t g' style='left:457px;top:2px;width:64px;height:15px;overflow:hidden;text-align:right;padding-left:3px;padding-right:2px'><div class='ln'>1 250,00</div></div>
<div class='t g' style='left:522px;top:2px;width:29px;height:15px;overflow:hidden;text-align:left;padding-left:3px;padding-right:2px'><div class='ln'>грн</div></div>
<div class='t g' style='left:552px;top:2px;width:32px;height:15px;overflow:hidden;text-align:right;padding-left:3px;padding-right:2px'><div class='ln'>1</div></div>
<div class='t g' style='left:585px;top:2px;width:64px;height:15px;overflow:hidden;text-align:right;padding-left:3px;padding-right:2px'><div class='ln'>1 250,00</div></div>
<div class='t g' style='left:650px;top:2px;width:49px;height:15px;overflow:hidden;text-align:right;padding-left:3px;padding-right:2px'><div class='ln'>100%</div></div>
<div class='t g' style='left:700px;top:2px;width:64px;height:15px;overflow:hidden;text-align:right;padding-left:3px;padding-right:2px'><div class='ln'>2 500,00</div></div>
<div class='t g' style='left:765px;top:2px;width:64px;height:15px;overflow:hidden;text-align:right;padding-left:3px;padding-right:2px'><div class='ln'>2 500,00</div></div>
<div class='t g' style='left:830px;top:2px;width:59px;height:15px;overflow:hidden;text-align:right;padding-left:3px;padding-right:2px'><div class='ln'>0,00</div></div>
<div class='t g' style='left:890px;top:2px;width:34px;height:15px;overflow:hidden;text-align:right;padding-left:3px;padding-right:2px'><div class='ln'>0%</div></div>
<div class='t g' style='left:925px;top:2px;width:36px;height:15px;overflow:hidden;text-align:right;padding-left:3px;padding-right:2px'><div class='ln'>1 250,00</div></div>
<div class='t g' style='left:962px;top:2px;width:55px;height:15px;overflow:hidden;text-align:right;padding-left:3px;padding-right:2px'><div class='ln'>1 250,00</div></div>
<div class='t g' style='left:1018px;top:2px;width:49px;height:15px;overflow:hidden;text-align:right;padding-left:3px;padding-right:2px'><div class='ln'>96</div></div>
</div>
<div class='a' style='left:6px;top:449px;width:1067px;height:17px;background:#ffd7d9;overflow:hidden'>
<div class='a' style='left:317px;top:0px;width:1px;height:16px;background:#f0f0f0;'></div>
<div class='a' style='left:371px;top:0px;width:1px;height:16px;background:#f0f0f0;'></div>
<div class='a' style='left:456px;top:0px;width:1px;height:16px;background:#f0f0f0;'></div>
<div class='a' style='left:521px;top:0px;width:1px;height:16px;background:#f0f0f0;'></div>
<div class='a' style='left:551px;top:0px;width:1px;height:16px;background:#f0f0f0;'></div>
<div class='a' style='left:584px;top:0px;width:1px;height:16px;background:#f0f0f0;'></div>
<div class='a' style='left:649px;top:0px;width:1px;height:16px;background:#f0f0f0;'></div>
<div class='a' style='left:699px;top:0px;width:1px;height:16px;background:#f0f0f0;'></div>
<div class='a' style='left:764px;top:0px;width:1px;height:16px;background:#f0f0f0;'></div>
<div class='a' style='left:829px;top:0px;width:1px;height:16px;background:#f0f0f0;'></div>
<div class='a' style='left:889px;top:0px;width:1px;height:16px;background:#f0f0f0;'></div>
<div class='a' style='left:924px;top:0px;width:1px;height:16px;background:#f0f0f0;'></div>
<div class='a' style='left:961px;top:0px;width:1px;height:16px;background:#f0f0f0;'></div>
<div class='a' style='left:1017px;top:0px;width:1px;height:16px;background:#f0f0f0;'></div>
<div class='a' style='left:0px;top:16px;width:1067px;height:1px;background:#ebebeb;'></div>
<div class='t g' style='left:0px;top:2px;width:317px;height:15px;overflow:hidden;text-align:left;padding-left:2px;padding-right:2px'><div class='ln' style='letter-spacing:-0.136px'>Набір для шашлика Германия</div></div>
<div class='t g' style='left:372px;top:2px;width:84px;height:15px;overflow:hidden;text-align:left;padding-left:3px;padding-right:2px'><div class='ln'>2949550000178</div></div>
<div class='t g' style='left:457px;top:2px;width:64px;height:15px;overflow:hidden;text-align:right;padding-left:3px;padding-right:2px'><div class='ln'>0,00</div></div>
<div class='t g' style='left:522px;top:2px;width:29px;height:15px;overflow:hidden;text-align:left;padding-left:3px;padding-right:2px'><div class='ln'>грн</div></div>
<div class='t g' style='left:552px;top:2px;width:32px;height:15px;overflow:hidden;text-align:right;padding-left:3px;padding-right:2px'><div class='ln'>1</div></div>
<div class='t g' style='left:585px;top:2px;width:64px;height:15px;overflow:hidden;text-align:right;padding-left:3px;padding-right:2px'><div class='ln'>0,00</div></div>
<div class='t g' style='left:650px;top:2px;width:49px;height:15px;overflow:hidden;text-align:right;padding-left:3px;padding-right:2px'><div class='ln'>0%</div></div>
<div class='t g' style='left:700px;top:2px;width:64px;height:15px;overflow:hidden;text-align:right;padding-left:3px;padding-right:2px'><div class='ln'>2 300,00</div></div>
<div class='t g' style='left:765px;top:2px;width:64px;height:15px;overflow:hidden;text-align:right;padding-left:3px;padding-right:2px'><div class='ln'>0,00</div></div>
<div class='t g' style='left:830px;top:2px;width:59px;height:15px;overflow:hidden;text-align:right;padding-left:3px;padding-right:2px'><div class='ln'>-2 300,00</div></div>
<div class='t g' style='left:890px;top:2px;width:34px;height:15px;overflow:hidden;text-align:right;padding-left:3px;padding-right:2px'><div class='ln'>0%</div></div>
<div class='t g' style='left:925px;top:2px;width:36px;height:15px;overflow:hidden;text-align:right;padding-left:3px;padding-right:2px'><div class='ln'>1 500,00</div></div>
<div class='t g' style='left:962px;top:2px;width:55px;height:15px;overflow:hidden;text-align:right;padding-left:3px;padding-right:2px'><div class='ln'>0,00</div></div>
<div class='t g' style='left:1018px;top:2px;width:49px;height:15px;overflow:hidden;text-align:right;padding-left:3px;padding-right:2px'><div class='ln'>8</div></div>
</div>
<div class='a' style='left:6px;top:466px;width:1067px;height:17px;background:#fff;overflow:hidden'>
<div class='a' style='left:317px;top:0px;width:1px;height:16px;background:#f0f0f0;'></div>
<div class='a' style='left:371px;top:0px;width:1px;height:16px;background:#f0f0f0;'></div>
<div class='a' style='left:456px;top:0px;width:1px;height:16px;background:#f0f0f0;'></div>
<div class='a' style='left:521px;top:0px;width:1px;height:16px;background:#f0f0f0;'></div>
<div class='a' style='left:551px;top:0px;width:1px;height:16px;background:#f0f0f0;'></div>
<div class='a' style='left:584px;top:0px;width:1px;height:16px;background:#f0f0f0;'></div>
<div class='a' style='left:649px;top:0px;width:1px;height:16px;background:#f0f0f0;'></div>
<div class='a' style='left:699px;top:0px;width:1px;height:16px;background:#f0f0f0;'></div>
<div class='a' style='left:764px;top:0px;width:1px;height:16px;background:#f0f0f0;'></div>
<div class='a' style='left:829px;top:0px;width:1px;height:16px;background:#f0f0f0;'></div>
<div class='a' style='left:889px;top:0px;width:1px;height:16px;background:#f0f0f0;'></div>
<div class='a' style='left:924px;top:0px;width:1px;height:16px;background:#f0f0f0;'></div>
<div class='a' style='left:961px;top:0px;width:1px;height:16px;background:#f0f0f0;'></div>
<div class='a' style='left:1017px;top:0px;width:1px;height:16px;background:#f0f0f0;'></div>
<div class='a' style='left:0px;top:16px;width:1067px;height:1px;background:#ebebeb;'></div>
<div class='t g' style='left:0px;top:2px;width:317px;height:15px;overflow:hidden;text-align:left;padding-left:2px;padding-right:2px'><div class='ln' style='letter-spacing:0.000px'>ПК</div></div>
<div class='t g' style='left:372px;top:2px;width:84px;height:15px;overflow:hidden;text-align:left;padding-left:3px;padding-right:2px'><div class='ln'>2949550031004</div></div>
<div class='t g' style='left:457px;top:2px;width:64px;height:15px;overflow:hidden;text-align:right;padding-left:3px;padding-right:2px'><div class='ln'>6 250,00</div></div>
<div class='t g' style='left:522px;top:2px;width:29px;height:15px;overflow:hidden;text-align:left;padding-left:3px;padding-right:2px'><div class='ln'>грн</div></div>
<div class='t g' style='left:552px;top:2px;width:32px;height:15px;overflow:hidden;text-align:right;padding-left:3px;padding-right:2px'><div class='ln'>1</div></div>
<div class='t g' style='left:585px;top:2px;width:64px;height:15px;overflow:hidden;text-align:right;padding-left:3px;padding-right:2px'><div class='ln'>6 250,00</div></div>
<div class='t g' style='left:700px;top:2px;width:64px;height:15px;overflow:hidden;text-align:right;padding-left:3px;padding-right:2px'><div class='ln'>12 500,00</div></div>
<div class='t g' style='left:1018px;top:2px;width:49px;height:15px;overflow:hidden;text-align:right;padding-left:3px;padding-right:2px'><div class='ln'>1</div></div>
</div>
<div class='a' style='left:6px;top:483px;width:1067px;height:17px;background:#fff;overflow:hidden'>
<div class='a' style='left:317px;top:0px;width:1px;height:16px;background:#f0f0f0;'></div>
<div class='a' style='left:371px;top:0px;width:1px;height:16px;background:#f0f0f0;'></div>
<div class='a' style='left:456px;top:0px;width:1px;height:16px;background:#f0f0f0;'></div>
<div class='a' style='left:521px;top:0px;width:1px;height:16px;background:#f0f0f0;'></div>
<div class='a' style='left:551px;top:0px;width:1px;height:16px;background:#f0f0f0;'></div>
<div class='a' style='left:584px;top:0px;width:1px;height:16px;background:#f0f0f0;'></div>
<div class='a' style='left:649px;top:0px;width:1px;height:16px;background:#f0f0f0;'></div>
<div class='a' style='left:699px;top:0px;width:1px;height:16px;background:#f0f0f0;'></div>
<div class='a' style='left:764px;top:0px;width:1px;height:16px;background:#f0f0f0;'></div>
<div class='a' style='left:829px;top:0px;width:1px;height:16px;background:#f0f0f0;'></div>
<div class='a' style='left:889px;top:0px;width:1px;height:16px;background:#f0f0f0;'></div>
<div class='a' style='left:924px;top:0px;width:1px;height:16px;background:#f0f0f0;'></div>
<div class='a' style='left:961px;top:0px;width:1px;height:16px;background:#f0f0f0;'></div>
<div class='a' style='left:1017px;top:0px;width:1px;height:16px;background:#f0f0f0;'></div>
<div class='a' style='left:0px;top:16px;width:1067px;height:1px;background:#ebebeb;'></div>
<div class='t g' style='left:0px;top:2px;width:317px;height:15px;overflow:hidden;text-align:left;padding-left:2px;padding-right:2px'><div class='ln' style='letter-spacing:-0.170px'>Плитка Opium 250*600*10мм 230626 Opium La Faenza Италия</div></div>
<div class='t g' style='left:318px;top:2px;width:53px;height:15px;overflow:hidden;text-align:left;padding-left:3px;padding-right:2px'><div class='ln'>230626</div></div>
<div class='t g' style='left:372px;top:2px;width:84px;height:15px;overflow:hidden;text-align:left;padding-left:3px;padding-right:2px'><div class='ln'>2973090001364</div></div>
<div class='t g' style='left:457px;top:2px;width:64px;height:15px;overflow:hidden;text-align:right;padding-left:3px;padding-right:2px'><div class='ln'>116,50</div></div>
<div class='t g' style='left:522px;top:2px;width:29px;height:15px;overflow:hidden;text-align:left;padding-left:3px;padding-right:2px'><div class='ln'>грн</div></div>
<div class='t g' style='left:552px;top:2px;width:32px;height:15px;overflow:hidden;text-align:right;padding-left:3px;padding-right:2px'><div class='ln'>1</div></div>
<div class='t g' style='left:585px;top:2px;width:64px;height:15px;overflow:hidden;text-align:right;padding-left:3px;padding-right:2px'><div class='ln'>116,50</div></div>
<div class='t g' style='left:650px;top:2px;width:49px;height:15px;overflow:hidden;text-align:right;padding-left:3px;padding-right:2px'><div class='ln'>200%</div></div>
<div class='t g' style='left:700px;top:2px;width:64px;height:15px;overflow:hidden;text-align:right;padding-left:3px;padding-right:2px'><div class='ln'>349,50</div></div>
<div class='t g' style='left:765px;top:2px;width:64px;height:15px;overflow:hidden;text-align:right;padding-left:3px;padding-right:2px'><div class='ln'>349,50</div></div>
<div class='t g' style='left:830px;top:2px;width:59px;height:15px;overflow:hidden;text-align:right;padding-left:3px;padding-right:2px'><div class='ln'>0,00</div></div>
<div class='t g' style='left:890px;top:2px;width:34px;height:15px;overflow:hidden;text-align:right;padding-left:3px;padding-right:2px'><div class='ln'>140%</div></div>
<div class='t g' style='left:925px;top:2px;width:36px;height:15px;overflow:hidden;text-align:right;padding-left:3px;padding-right:2px'><div class='ln'>279,600</div></div>
<div class='t g' style='left:962px;top:2px;width:55px;height:15px;overflow:hidden;text-align:right;padding-left:3px;padding-right:2px'><div class='ln'>279,60</div></div>
<div class='t g' style='left:1018px;top:2px;width:49px;height:15px;overflow:hidden;text-align:right;padding-left:3px;padding-right:2px'><div class='ln'>50</div></div>
</div>
<div class='a' style='left:6px;top:500px;width:1067px;height:30px;background:#fff;overflow:hidden'>
<div class='a' style='left:317px;top:0px;width:1px;height:29px;background:#f0f0f0;'></div>
<div class='a' style='left:371px;top:0px;width:1px;height:29px;background:#f0f0f0;'></div>
<div class='a' style='left:456px;top:0px;width:1px;height:29px;background:#f0f0f0;'></div>
<div class='a' style='left:521px;top:0px;width:1px;height:29px;background:#f0f0f0;'></div>
<div class='a' style='left:551px;top:0px;width:1px;height:29px;background:#f0f0f0;'></div>
<div class='a' style='left:584px;top:0px;width:1px;height:29px;background:#f0f0f0;'></div>
<div class='a' style='left:649px;top:0px;width:1px;height:29px;background:#f0f0f0;'></div>
<div class='a' style='left:699px;top:0px;width:1px;height:29px;background:#f0f0f0;'></div>
<div class='a' style='left:764px;top:0px;width:1px;height:29px;background:#f0f0f0;'></div>
<div class='a' style='left:829px;top:0px;width:1px;height:29px;background:#f0f0f0;'></div>
<div class='a' style='left:889px;top:0px;width:1px;height:29px;background:#f0f0f0;'></div>
<div class='a' style='left:924px;top:0px;width:1px;height:29px;background:#f0f0f0;'></div>
<div class='a' style='left:961px;top:0px;width:1px;height:29px;background:#f0f0f0;'></div>
<div class='a' style='left:1017px;top:0px;width:1px;height:29px;background:#f0f0f0;'></div>
<div class='a' style='left:0px;top:29px;width:1067px;height:1px;background:#ebebeb;'></div>
<div class='t g' style='left:0px;top:2px;width:317px;height:28px;overflow:hidden;text-align:left;padding-left:2px;padding-right:2px'><div class='ln' style='letter-spacing:-0.062px'>Плитка Palace capitonne 330*600*10мм black 230627 Palace</div><div class='ln' style='letter-spacing:-0.348px'>Marazzi Италия</div></div>
<div class='t g' style='left:318px;top:2px;width:53px;height:28px;overflow:hidden;text-align:left;padding-left:3px;padding-right:2px'><div class='ln'>230627</div></div>
<div class='t g' style='left:372px;top:2px;width:84px;height:28px;overflow:hidden;text-align:left;padding-left:3px;padding-right:2px'><div class='ln'>2973090001371</div></div>
<div class='t g' style='left:457px;top:2px;width:64px;height:28px;overflow:hidden;text-align:right;padding-left:3px;padding-right:2px'><div class='ln'>127,30</div></div>
<div class='t g' style='left:522px;top:2px;width:29px;height:28px;overflow:hidden;text-align:left;padding-left:3px;padding-right:2px'><div class='ln'>грн</div></div>
<div class='t g' style='left:552px;top:2px;width:32px;height:28px;overflow:hidden;text-align:right;padding-left:3px;padding-right:2px'><div class='ln'>1</div></div>
<div class='t g' style='left:585px;top:2px;width:64px;height:28px;overflow:hidden;text-align:right;padding-left:3px;padding-right:2px'><div class='ln'>127,30</div></div>
<div class='t g' style='left:650px;top:2px;width:49px;height:28px;overflow:hidden;text-align:right;padding-left:3px;padding-right:2px'><div class='ln'>200%</div></div>
<div class='t g' style='left:700px;top:2px;width:64px;height:28px;overflow:hidden;text-align:right;padding-left:3px;padding-right:2px'><div class='ln'>381,90</div></div>
<div class='t g' style='left:765px;top:2px;width:64px;height:28px;overflow:hidden;text-align:right;padding-left:3px;padding-right:2px'><div class='ln'>381,90</div></div>
<div class='t g' style='left:830px;top:2px;width:59px;height:28px;overflow:hidden;text-align:right;padding-left:3px;padding-right:2px'><div class='ln'>0,00</div></div>
<div class='t g' style='left:890px;top:2px;width:34px;height:28px;overflow:hidden;text-align:right;padding-left:3px;padding-right:2px'><div class='ln'>140%</div></div>
<div class='t g' style='left:925px;top:2px;width:36px;height:28px;overflow:hidden;text-align:right;padding-left:3px;padding-right:2px'><div class='ln'>305,52</div></div>
<div class='t g' style='left:962px;top:2px;width:55px;height:28px;overflow:hidden;text-align:right;padding-left:3px;padding-right:2px'><div class='ln'>305,55</div></div>
<div class='t g' style='left:1018px;top:2px;width:49px;height:28px;overflow:hidden;text-align:right;padding-left:3px;padding-right:2px'><div class='ln'>59</div></div>
</div>
<div class='a' style='left:6px;top:530px;width:1067px;height:17px;background:#fff;overflow:hidden'>
<div class='a' style='left:317px;top:0px;width:1px;height:16px;background:#f0f0f0;'></div>
<div class='a' style='left:371px;top:0px;width:1px;height:16px;background:#f0f0f0;'></div>
<div class='a' style='left:456px;top:0px;width:1px;height:16px;background:#f0f0f0;'></div>
<div class='a' style='left:521px;top:0px;width:1px;height:16px;background:#f0f0f0;'></div>
<div class='a' style='left:551px;top:0px;width:1px;height:16px;background:#f0f0f0;'></div>
<div class='a' style='left:584px;top:0px;width:1px;height:16px;background:#f0f0f0;'></div>
<div class='a' style='left:649px;top:0px;width:1px;height:16px;background:#f0f0f0;'></div>
<div class='a' style='left:699px;top:0px;width:1px;height:16px;background:#f0f0f0;'></div>
<div class='a' style='left:764px;top:0px;width:1px;height:16px;background:#f0f0f0;'></div>
<div class='a' style='left:829px;top:0px;width:1px;height:16px;background:#f0f0f0;'></div>
<div class='a' style='left:889px;top:0px;width:1px;height:16px;background:#f0f0f0;'></div>
<div class='a' style='left:924px;top:0px;width:1px;height:16px;background:#f0f0f0;'></div>
<div class='a' style='left:961px;top:0px;width:1px;height:16px;background:#f0f0f0;'></div>
<div class='a' style='left:1017px;top:0px;width:1px;height:16px;background:#f0f0f0;'></div>
<div class='a' style='left:0px;top:16px;width:1067px;height:1px;background:#ebebeb;'></div>
<div class='t g' style='left:0px;top:2px;width:317px;height:15px;overflow:hidden;text-align:left;padding-left:2px;padding-right:2px'><div class='ln' style='letter-spacing:0.023px'>Подарочный сертификат "250"</div></div>
<div class='t g' style='left:522px;top:2px;width:29px;height:15px;overflow:hidden;text-align:left;padding-left:3px;padding-right:2px'><div class='ln'>грн</div></div>
<div class='t g' style='left:552px;top:2px;width:32px;height:15px;overflow:hidden;text-align:right;padding-left:3px;padding-right:2px'><div class='ln'>1</div></div>
<div class='t g' style='left:700px;top:2px;width:64px;height:15px;overflow:hidden;text-align:right;padding-left:3px;padding-right:2px'><div class='ln'>250,00</div></div>
<div class='t g' style='left:925px;top:2px;width:36px;height:15px;overflow:hidden;text-align:right;padding-left:3px;padding-right:2px'><div class='ln'>0,00</div></div>
<div class='t g' style='left:1018px;top:2px;width:49px;height:15px;overflow:hidden;text-align:right;padding-left:3px;padding-right:2px'><div class='ln'>1</div></div>
</div>
<div class='a' style='left:6px;top:547px;width:1067px;height:17px;background:#fff;overflow:hidden'>
<div class='a' style='left:317px;top:0px;width:1px;height:16px;background:#f0f0f0;'></div>
<div class='a' style='left:371px;top:0px;width:1px;height:16px;background:#f0f0f0;'></div>
<div class='a' style='left:456px;top:0px;width:1px;height:16px;background:#f0f0f0;'></div>
<div class='a' style='left:521px;top:0px;width:1px;height:16px;background:#f0f0f0;'></div>
<div class='a' style='left:551px;top:0px;width:1px;height:16px;background:#f0f0f0;'></div>
<div class='a' style='left:584px;top:0px;width:1px;height:16px;background:#f0f0f0;'></div>
<div class='a' style='left:649px;top:0px;width:1px;height:16px;background:#f0f0f0;'></div>
<div class='a' style='left:699px;top:0px;width:1px;height:16px;background:#f0f0f0;'></div>
<div class='a' style='left:764px;top:0px;width:1px;height:16px;background:#f0f0f0;'></div>
<div class='a' style='left:829px;top:0px;width:1px;height:16px;background:#f0f0f0;'></div>
<div class='a' style='left:889px;top:0px;width:1px;height:16px;background:#f0f0f0;'></div>
<div class='a' style='left:924px;top:0px;width:1px;height:16px;background:#f0f0f0;'></div>
<div class='a' style='left:961px;top:0px;width:1px;height:16px;background:#f0f0f0;'></div>
<div class='a' style='left:1017px;top:0px;width:1px;height:16px;background:#f0f0f0;'></div>
<div class='a' style='left:0px;top:16px;width:1067px;height:1px;background:#ebebeb;'></div>
<div class='t g' style='left:0px;top:2px;width:317px;height:15px;overflow:hidden;text-align:left;padding-left:2px;padding-right:2px'><div class='ln' style='letter-spacing:-0.075px'>Принтер чеков 79456 Kronotex Германия</div></div>
<div class='t g' style='left:318px;top:2px;width:53px;height:15px;overflow:hidden;text-align:left;padding-left:3px;padding-right:2px'><div class='ln'>79456</div></div>
<div class='t g' style='left:372px;top:2px;width:84px;height:15px;overflow:hidden;text-align:left;padding-left:3px;padding-right:2px'><div class='ln'>2949550010481</div></div>
<div class='t g' style='left:457px;top:2px;width:64px;height:15px;overflow:hidden;text-align:right;padding-left:3px;padding-right:2px'><div class='ln'>1 500,00</div></div>
<div class='t g' style='left:522px;top:2px;width:29px;height:15px;overflow:hidden;text-align:left;padding-left:3px;padding-right:2px'><div class='ln'>грн</div></div>
<div class='t g' style='left:552px;top:2px;width:32px;height:15px;overflow:hidden;text-align:right;padding-left:3px;padding-right:2px'><div class='ln'>1</div></div>
<div class='t g' style='left:585px;top:2px;width:64px;height:15px;overflow:hidden;text-align:right;padding-left:3px;padding-right:2px'><div class='ln'>1 500,00</div></div>
<div class='t g' style='left:650px;top:2px;width:49px;height:15px;overflow:hidden;text-align:right;padding-left:3px;padding-right:2px'><div class='ln'>100%</div></div>
<div class='t g' style='left:700px;top:2px;width:64px;height:15px;overflow:hidden;text-align:right;padding-left:3px;padding-right:2px'><div class='ln'>3 000,00</div></div>
<div class='t g' style='left:765px;top:2px;width:64px;height:15px;overflow:hidden;text-align:right;padding-left:3px;padding-right:2px'><div class='ln'>3 000,00</div></div>
<div class='t g' style='left:830px;top:2px;width:59px;height:15px;overflow:hidden;text-align:right;padding-left:3px;padding-right:2px'><div class='ln'>0,00</div></div>
<div class='t g' style='left:890px;top:2px;width:34px;height:15px;overflow:hidden;text-align:right;padding-left:3px;padding-right:2px'><div class='ln'>0%</div></div>
<div class='t g' style='left:925px;top:2px;width:36px;height:15px;overflow:hidden;text-align:right;padding-left:3px;padding-right:2px'><div class='ln'>1 500,00</div></div>
<div class='t g' style='left:962px;top:2px;width:55px;height:15px;overflow:hidden;text-align:right;padding-left:3px;padding-right:2px'><div class='ln'>1 500,00</div></div>
<div class='t g' style='left:1018px;top:2px;width:49px;height:15px;overflow:hidden;text-align:right;padding-left:3px;padding-right:2px'><div class='ln'>1</div></div>
</div>
<div class='a' style='left:6px;top:564px;width:1067px;height:7px;background:#fff;overflow:hidden'>
<div class='a' style='left:317px;top:0px;width:1px;height:16px;background:#f0f0f0;'></div>
<div class='a' style='left:371px;top:0px;width:1px;height:16px;background:#f0f0f0;'></div>
<div class='a' style='left:456px;top:0px;width:1px;height:16px;background:#f0f0f0;'></div>
<div class='a' style='left:521px;top:0px;width:1px;height:16px;background:#f0f0f0;'></div>
<div class='a' style='left:551px;top:0px;width:1px;height:16px;background:#f0f0f0;'></div>
<div class='a' style='left:584px;top:0px;width:1px;height:16px;background:#f0f0f0;'></div>
<div class='a' style='left:649px;top:0px;width:1px;height:16px;background:#f0f0f0;'></div>
<div class='a' style='left:699px;top:0px;width:1px;height:16px;background:#f0f0f0;'></div>
<div class='a' style='left:764px;top:0px;width:1px;height:16px;background:#f0f0f0;'></div>
<div class='a' style='left:829px;top:0px;width:1px;height:16px;background:#f0f0f0;'></div>
<div class='a' style='left:889px;top:0px;width:1px;height:16px;background:#f0f0f0;'></div>
<div class='a' style='left:924px;top:0px;width:1px;height:16px;background:#f0f0f0;'></div>
<div class='a' style='left:961px;top:0px;width:1px;height:16px;background:#f0f0f0;'></div>
<div class='a' style='left:1017px;top:0px;width:1px;height:16px;background:#f0f0f0;'></div>
<div class='a' style='left:0px;top:16px;width:1067px;height:1px;background:#ebebeb;'></div>
<div class='t g' style='left:0px;top:2px;width:317px;height:15px;overflow:hidden;text-align:left;padding-left:2px;padding-right:2px'><div class='ln' style='letter-spacing:0.000px'>Принтер чеков Kronotex Германия</div></div>
<div class='t g' style='left:372px;top:2px;width:84px;height:15px;overflow:hidden;text-align:left;padding-left:3px;padding-right:2px'><div class='ln'>2949550020534</div></div>
<div class='t g' style='left:457px;top:2px;width:64px;height:15px;overflow:hidden;text-align:right;padding-left:3px;padding-right:2px'><div class='ln'>0,00</div></div>
<div class='t g' style='left:522px;top:2px;width:29px;height:15px;overflow:hidden;text-align:left;padding-left:3px;padding-right:2px'><div class='ln'>грн</div></div>
<div class='t g' style='left:552px;top:2px;width:32px;height:15px;overflow:hidden;text-align:right;padding-left:3px;padding-right:2px'><div class='ln'>1</div></div>
<div class='t g' style='left:585px;top:2px;width:64px;height:15px;overflow:hidden;text-align:right;padding-left:3px;padding-right:2px'><div class='ln'>0,00</div></div>
<div class='t g' style='left:700px;top:2px;width:64px;height:15px;overflow:hidden;text-align:right;padding-left:3px;padding-right:2px'><div class='ln'>2 000,00</div></div>
<div class='t g' style='left:1018px;top:2px;width:49px;height:15px;overflow:hidden;text-align:right;padding-left:3px;padding-right:2px'><div class='ln'>1</div></div>
</div>
<div class='a' style='left:5px;top:228px;width:1087px;height:1px;background:#a0a0a0;'></div>
<div class='a' style='left:5px;top:228px;width:1px;height:366px;background:#a0a0a0;'></div>
<div class='a' style='left:6px;top:229px;width:1067px;height:1px;background:#fff;'></div>
<div class='a' style='left:6px;top:229px;width:1px;height:60px;background:#fff;'></div>
<div class='a' style='left:6px;top:246px;width:1067px;height:1px;background:#a0a0a0;'></div>
<div class='a' style='left:6px;top:247px;width:1067px;height:1px;background:#fff;'></div>
<div class='a' style='left:6px;top:290px;width:1068px;height:1px;background:#a0a0a0;'></div>
<div class='a' style='left:323px;top:249px;width:1px;height:40px;background:#a0a0a0;'></div>
<div class='a' style='left:324px;top:249px;width:1px;height:40px;background:#fff;'></div>
<div class='a' style='left:377px;top:249px;width:1px;height:40px;background:#a0a0a0;'></div>
<div class='a' style='left:378px;top:249px;width:1px;height:40px;background:#fff;'></div>
<div class='a' style='left:462px;top:229px;width:1px;height:61px;background:#a0a0a0;'></div>
<div class='a' style='left:463px;top:229px;width:1px;height:61px;background:#fff;'></div>
<div class='a' style='left:527px;top:249px;width:1px;height:40px;background:#a0a0a0;'></div>
<div class='a' style='left:528px;top:249px;width:1px;height:40px;background:#fff;'></div>
<div class='a' style='left:557px;top:249px;width:1px;height:40px;background:#a0a0a0;'></div>
<div class='a' style='left:558px;top:249px;width:1px;height:40px;background:#fff;'></div>
<div class='a' style='left:590px;top:249px;width:1px;height:40px;background:#a0a0a0;'></div>
<div class='a' style='left:591px;top:249px;width:1px;height:40px;background:#fff;'></div>
<div class='a' style='left:655px;top:229px;width:1px;height:61px;background:#a0a0a0;'></div>
<div class='a' style='left:656px;top:229px;width:1px;height:61px;background:#fff;'></div>
<div class='a' style='left:705px;top:249px;width:1px;height:40px;background:#a0a0a0;'></div>
<div class='a' style='left:706px;top:249px;width:1px;height:40px;background:#fff;'></div>
<div class='a' style='left:770px;top:249px;width:1px;height:40px;background:#a0a0a0;'></div>
<div class='a' style='left:771px;top:249px;width:1px;height:40px;background:#fff;'></div>
<div class='a' style='left:835px;top:249px;width:1px;height:40px;background:#a0a0a0;'></div>
<div class='a' style='left:836px;top:249px;width:1px;height:40px;background:#fff;'></div>
<div class='a' style='left:895px;top:229px;width:1px;height:61px;background:#a0a0a0;'></div>
<div class='a' style='left:896px;top:229px;width:1px;height:61px;background:#fff;'></div>
<div class='a' style='left:930px;top:249px;width:1px;height:40px;background:#a0a0a0;'></div>
<div class='a' style='left:931px;top:249px;width:1px;height:40px;background:#fff;'></div>
<div class='a' style='left:967px;top:249px;width:1px;height:40px;background:#a0a0a0;'></div>
<div class='a' style='left:968px;top:249px;width:1px;height:40px;background:#fff;'></div>
<div class='a' style='left:1023px;top:229px;width:1px;height:61px;background:#a0a0a0;'></div>
<div class='a' style='left:1024px;top:229px;width:1px;height:61px;background:#fff;'></div>
<div class='a' style='left:1073px;top:229px;width:1px;height:61px;background:#a0a0a0;'></div>

<div class='t g' style='left:6px;top:232px;width:456px;text-align:center'><div class='ln'>Товар</div></div>
<div class='t g' style='left:463px;top:232px;width:192px;text-align:center'><div class='ln'>Закупівля</div></div>
<div class='t g' style='left:656px;top:232px;width:239px;text-align:center'><div class='ln'>Роздріб</div></div>
<div class='t g' style='left:896px;top:232px;width:127px;text-align:center'><div class='ln'>Опт</div></div>
<div class='t g' style='left:10px;top:250px;color:#d88a2c'><div class='ln'>Товар</div></div>
<svg class='a' style='left:304px;top:248px' width='18' height='41' viewBox='0 0 18 41'><path d='M9.5 1.5L2 39.5' stroke='#9a9a9a' stroke-width='1.2'/><path d='M10.5 1.5L17 39.5H3' fill='none' stroke='#fff' stroke-width='1'/></svg>
<div class='a' style='left:325px;top:249px;width:51px;height:40px;overflow:hidden'><div class='t g' style='left:50%;top:1px;width:max-content;transform:translateX(-50%);text-align:center'><div class='ln'>Артикул</div></div></div>
<div class='a' style='left:379px;top:249px;width:82px;height:40px;overflow:hidden'><div class='t g' style='left:50%;top:1px;width:max-content;transform:translateX(-50%);text-align:center'><div class='ln'>Штрих-код</div></div></div>
<div class='a' style='left:464px;top:249px;width:62px;height:40px;overflow:hidden'><div class='t g' style='left:50%;top:1px;width:max-content;transform:translateX(-50%);text-align:center'><div class='ln'>Ціна у</div><div class='ln'>валюті</div></div></div>
<div class='a' style='left:529px;top:249px;width:27px;height:40px;overflow:hidden'><div class='t g' style='left:50%;top:1px;width:max-content;transform:translateX(-50%);text-align:center'><div class='ln'>Вал.</div></div></div>
<div class='a' style='left:559px;top:249px;width:30px;height:40px;overflow:hidden'><div class='t g' style='left:50%;top:1px;width:max-content;transform:translateX(-50%);text-align:center'><div class='ln'>Курс</div></div></div>
<div class='a' style='left:592px;top:249px;width:62px;height:40px;overflow:hidden'><div class='t g' style='left:50%;top:1px;width:max-content;transform:translateX(-50%);text-align:center'><div class='ln'>Ціна в нац.</div><div class='ln'>валюті</div></div></div>
<div class='a' style='left:657px;top:249px;width:47px;height:40px;overflow:hidden'><div class='t g' style='left:50%;top:1px;width:max-content;transform:translateX(-50%);text-align:center'><div class='ln'>Націнка</div><div class='ln'>роздріб.</div></div></div>
<div class='a' style='left:707px;top:249px;width:62px;height:40px;overflow:hidden'><div class='t g' style='left:50%;top:1px;width:max-content;transform:translateX(-50%);text-align:center'><div class='ln'>Поточна</div><div class='ln'>роздріб.</div><div class='ln'>ціна</div></div></div>
<div class='a' style='left:772px;top:249px;width:62px;height:40px;overflow:hidden'><div class='t g' style='left:50%;top:1px;width:max-content;transform:translateX(-50%);text-align:center'><div class='ln'>Розрахована</div><div class='ln'>роздріб.</div><div class='ln'>ціна</div></div></div>
<div class='a' style='left:837px;top:249px;width:57px;height:40px;overflow:hidden'><div class='t g' style='left:50%;top:1px;width:max-content;transform:translateX(-50%);text-align:center'><div class='ln'>Змінення</div><div class='ln'>ціни</div></div></div>
<div class='a' style='left:897px;top:249px;width:32px;height:40px;overflow:hidden'><div class='t g' style='left:50%;top:1px;width:max-content;transform:translateX(-50%);text-align:center'><div class='ln'>Націнка</div><div class='ln'>опт.</div></div></div>
<div class='a' style='left:932px;top:249px;width:34px;height:40px;overflow:hidden'><div class='t g' style='left:50%;top:1px;width:max-content;transform:translateX(-50%);text-align:center'><div class='ln'>Поточна</div><div class='ln'>опт.</div><div class='ln'>ціна</div></div></div>
<div class='a' style='left:969px;top:249px;width:53px;height:40px;overflow:hidden'><div class='t g' style='left:50%;top:1px;width:max-content;transform:translateX(-50%);text-align:center'><div class='ln'>Розрахована</div><div class='ln'>опт. ціна</div></div></div>
<div class='a' style='left:1025px;top:249px;width:47px;height:40px;overflow:hidden'><div class='t g' style='left:50%;top:1px;width:max-content;transform:translateX(-50%);text-align:center'><div class='ln'>К-сть</div></div></div>
<div class='a' style='left:1074px;top:229px;width:18px;height:366px;background:#fff;'></div>
<div class='a' style='left:1092px;top:229px;width:1px;height:366px;background:#ebebeb;'></div>
<svg class='a' style='left:1077px;top:233px' width='11' height='8' viewBox='0 0 11 8'><path d='M1.5 6.5L5.5 2.5L9.5 6.5' fill='none' stroke='#606060' stroke-width='1.8'/></svg>
<svg class='a' style='left:1077px;top:581px' width='11' height='8' viewBox='0 0 11 8'><path d='M1.5 1.5L5.5 5.5L9.5 1.5' fill='none' stroke='#606060' stroke-width='1.8'/></svg>
<div class='a' style='left:1075px;top:437px;width:15px;height:83px;background:#c2c2c2;border-radius:4px'></div>
<div class='a' style='left:6px;top:571px;width:1067px;height:1px;background:#a0a0a0;'></div>
<div class='a' style='left:6px;top:572px;width:1067px;height:21px;background:#f0f0f0;'></div>
<div class='a' style='left:5px;top:593px;width:1069px;height:1px;background:#a0a0a0;'></div>
<div class='a' style='left:5px;top:594px;width:1069px;height:1px;background:#fff;'></div>
<div class='a' style='left:1073px;top:571px;width:1px;height:23px;background:#a0a0a0;'></div>
<div class='a' style='left:8px;top:574px;width:314px;height:1px;background:#a0a0a0;'></div><div class='a' style='left:8px;top:574px;width:1px;height:17px;background:#a0a0a0;'></div><div class='a' style='left:8px;top:591px;width:315px;height:1px;background:#fff;'></div><div class='a' style='left:322px;top:574px;width:1px;height:18px;background:#fff;'></div><div class='t g' style='left:11px;top:576.5px;width:310px;text-align:left'><div class='ln'>Всього 52 товаров</div></div>
<div class='a' style='left:837px;top:574px;width:57px;height:1px;background:#a0a0a0;'></div><div class='a' style='left:837px;top:574px;width:1px;height:17px;background:#a0a0a0;'></div><div class='a' style='left:837px;top:591px;width:58px;height:1px;background:#fff;'></div><div class='a' style='left:894px;top:574px;width:1px;height:18px;background:#fff;'></div><div class='t g' style='left:840px;top:576.5px;width:53px;text-align:right'><div class='ln'>-2 485,63</div></div>
<div class='a' style='left:1025px;top:574px;width:45px;height:1px;background:#a0a0a0;'></div><div class='a' style='left:1025px;top:574px;width:1px;height:17px;background:#a0a0a0;'></div><div class='a' style='left:1025px;top:591px;width:46px;height:1px;background:#fff;'></div><div class='a' style='left:1070px;top:574px;width:1px;height:18px;background:#fff;'></div><div class='t g' style='left:1028px;top:576.5px;width:41px;text-align:right'><div class='ln'>2739,45</div></div>
</body></html>
